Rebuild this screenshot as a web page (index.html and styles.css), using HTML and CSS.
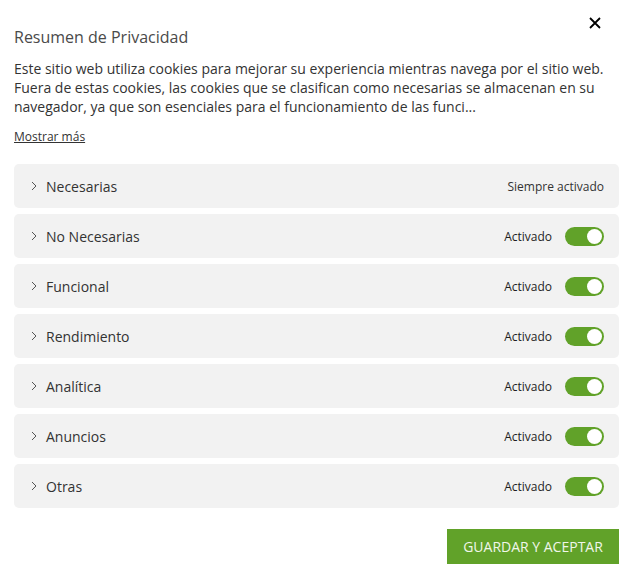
FILE: index.html
```html
<!DOCTYPE html>
<html lang="es">
<head>
<meta charset="utf-8">
<link rel="stylesheet" href="styles.css">
</head>
<body>
<div class="modal">
  <button class="close" aria-label="Cerrar">
    <svg width="12" height="12" viewBox="0 0 12 12"><path d="M1 1L11 11M11 1L1 11" stroke="#000" stroke-width="1.8" fill="none"/></svg>
  </button>
  <h2 class="title">Resumen de Privacidad</h2>
  <p class="desc">Este sitio web utiliza cookies para mejorar su experiencia mientras navega por el sitio web. Fuera de estas cookies, las cookies que se clasifican como necesarias se almacenan en su navegador, ya que son esenciales para el funcionamiento de las funci...</p>
  <a class="more" href="#">Mostrar más</a>
  <div class="list">
    <div class="row"><svg class="chev" width="6" height="10" viewBox="0 0 6 10"><path d="M1 1L5 5L1 9" stroke="#555" stroke-width="1" fill="none"/></svg><span class="label">Necesarias</span><span class="always">Siempre activado</span></div>
    <div class="row"><svg class="chev" width="6" height="10" viewBox="0 0 6 10"><path d="M1 1L5 5L1 9" stroke="#555" stroke-width="1" fill="none"/></svg><span class="label">No Necesarias</span><span class="state">Activado</span><span class="toggle"><span class="knob"></span></span></div>
    <div class="row"><svg class="chev" width="6" height="10" viewBox="0 0 6 10"><path d="M1 1L5 5L1 9" stroke="#555" stroke-width="1" fill="none"/></svg><span class="label">Funcional</span><span class="state">Activado</span><span class="toggle"><span class="knob"></span></span></div>
    <div class="row"><svg class="chev" width="6" height="10" viewBox="0 0 6 10"><path d="M1 1L5 5L1 9" stroke="#555" stroke-width="1" fill="none"/></svg><span class="label">Rendimiento</span><span class="state">Activado</span><span class="toggle"><span class="knob"></span></span></div>
    <div class="row"><svg class="chev" width="6" height="10" viewBox="0 0 6 10"><path d="M1 1L5 5L1 9" stroke="#555" stroke-width="1" fill="none"/></svg><span class="label">Analítica</span><span class="state">Activado</span><span class="toggle"><span class="knob"></span></span></div>
    <div class="row"><svg class="chev" width="6" height="10" viewBox="0 0 6 10"><path d="M1 1L5 5L1 9" stroke="#555" stroke-width="1" fill="none"/></svg><span class="label">Anuncios</span><span class="state">Activado</span><span class="toggle"><span class="knob"></span></span></div>
    <div class="row"><svg class="chev" width="6" height="10" viewBox="0 0 6 10"><path d="M1 1L5 5L1 9" stroke="#555" stroke-width="1" fill="none"/></svg><span class="label">Otras</span><span class="state">Activado</span><span class="toggle"><span class="knob"></span></span></div>
  </div>
  <div class="footer">
    <button class="save">GUARDAR Y ACEPTAR</button>
  </div>
</div>
</body>
</html>
```
FILE: styles.css
```css
html, body {
  margin: 0;
  padding: 0;
  background: #fff;
}
body {
  font-family: "Open Sans", "Noto Sans", sans-serif;
  color: #333;
}
.modal {
  position: relative;
  width: 632px;
  height: 583px;
  box-sizing: border-box;
  padding: 26px 13px 0 14px;
}
.close {
  position: absolute;
  top: 17px;
  right: 31px;
  width: 12px;
  height: 12px;
  padding: 0;
  border: 0;
  background: none;
  display: flex;
}
.title {
  margin: 0;
  font-size: 16px;
  font-weight: 500;
  color: #4a4a4a;
  line-height: 22px;
}
.desc {
  margin: 11px 0 0;
  font-size: 14px;
  line-height: 19px;
  color: #333;
}
.more {
  display: inline-block;
  margin-top: 13px;
  font-size: 12px;
  color: #333;
  text-decoration: underline;
  line-height: 16px;
}
.list {
  margin-top: 18px;
  display: flex;
  flex-direction: column;
  gap: 6px;
}
.row {
  height: 44px;
  background: #f2f2f2;
  border-radius: 5px;
  display: flex;
  align-items: center;
  padding: 0 15px 0 17px;
}
.chev {
  margin-right: 9px;
  flex-shrink: 0;
}
.label {
  flex: 1;
  font-size: 14px;
  color: #333;
}
.always {
  font-size: 12px;
  color: #333;
}
.state {
  font-size: 12px;
  color: #1e1e1e;
  margin-right: 13px;
}
.toggle {
  width: 39px;
  height: 19px;
  border-radius: 10px;
  background: #61a229;
  position: relative;
}
.knob {
  position: absolute;
  top: 2px;
  right: 2px;
  width: 15px;
  height: 15px;
  border-radius: 50%;
  background: #fff;
}
.footer {
  display: flex;
  justify-content: flex-end;
  margin-top: 21px;
}
.save {
  width: 172px;
  height: 35px;
  border: 0;
  background: #61a229;
  color: #f0f6ea;
  font-family: "Open Sans", "Noto Sans", sans-serif;
  font-size: 14px;
  padding: 0;
}
```
